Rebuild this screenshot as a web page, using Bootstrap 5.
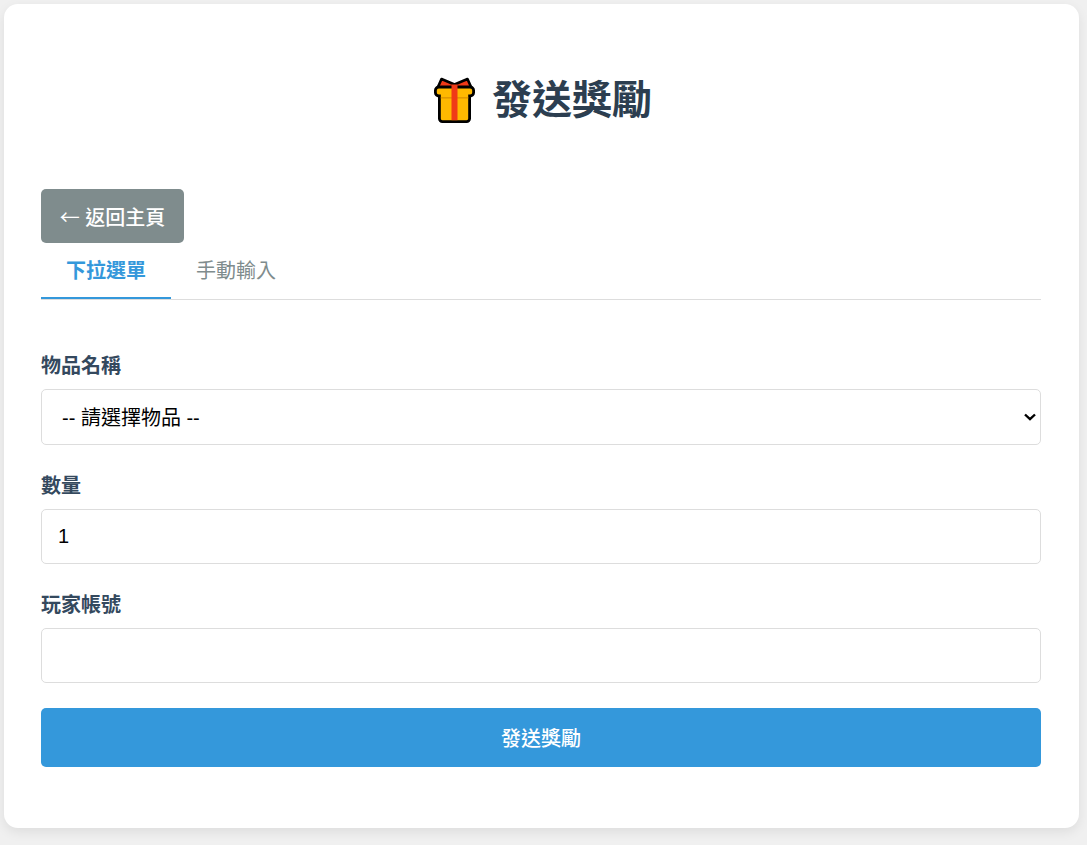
<!DOCTYPE html>
<html lang="zh-Hant">
<head>
<meta charset="utf-8">
<title>發送獎勵</title>
<link href="https://cdn.jsdelivr.net/npm/bootstrap@5.3.0/dist/css/bootstrap.min.css" rel="stylesheet">
<style>
html, body { height: 100%; }
body { background: #f0f0f0; font-family: "Liberation Sans", "Noto Sans CJK TC", sans-serif; padding: 4px 8px 0 4px; font-size: 20px; overflow: hidden; }
.panel { background: #fff; border-radius: 14px; box-shadow: 0 4px 12px rgba(0,0,0,.08); height: 824px; padding: 0 38px 0 37px; }
.title-row { height: 185px; padding-top: 6px; padding-left: 4px; color: #2c3e50; font-size: 40px; font-weight: 700; gap: 17px; }
.gift { width: 41px; height: 46px; }
.back-btn { background: #7f8c8d; color: #fff; font-size: 20px; font-weight: 500; height: 54px; width: 143px; border-radius: 5px; border: 0; padding: 2px 0 0; }
.back-btn:hover { background: #7f8c8d; color: #fff; }
.arrow-glyph { font-family: "Noto Sans CJK TC", sans-serif; font-weight: 400; }
.tabbar { border-bottom: 1px solid #ddd; height: 57px; margin-bottom: 52px; }
.tabbar .tab-link { display: block; width: 130px; height: 56px; padding-top: 14px; text-align: center; color: #7f8c8d; font-size: 20px; line-height: 29px; text-decoration: none; }
.tabbar .tab-link.on { color: #3498db; font-weight: 700; border-bottom: 2px solid #3498db; }
.fld-label { color: #34495e; font-weight: 700; font-size: 20px; line-height: 29px; margin-bottom: 8px; display: block; }
.fld { margin-bottom: 27px; }
.fld:last-of-type { margin-bottom: 25px; }
.fld-box { display: block; width: 100%; height: 55px; border: 1px solid #ddd; border-radius: 5px; font-size: 20px; padding: 0 16px; background: #fff; color: #000; font-family: inherit; }
select.fld-box { height: 56px; padding: 1px 15px 0 20px; appearance: none; background: #fff url("data:image/svg+xml,%3Csvg xmlns='http://www.w3.org/2000/svg' width='12' height='8' viewBox='0 0 12 8'%3E%3Cpath d='M1 1.5 L6 6.2 L11 1.5' fill='none' stroke='%23000' stroke-width='2.4'/%3E%3C/svg%3E") no-repeat right 4px center; }
.send-btn { background: #3498db; color: #fff; font-size: 20px; font-weight: 500; height: 59px; width: 100%; border: 0; border-radius: 5px; padding: 2px 0 0; }
.send-btn:hover { background: #3498db; color: #fff; }
</style>
</head>
<body>
<div class="panel">
  <div class="title-row d-flex align-items-center justify-content-center">
    <svg class="gift" viewBox="0 0 41 46" aria-hidden="true">
      <path d="M3.5 11 L7.5 2 L20.5 7.5 L33.5 2 L37.5 11 Z" fill="#f03a17" stroke="#000" stroke-width="2.6" stroke-linejoin="round"/>
      <rect x="5.4" y="16" width="30.2" height="28.6" rx="3" fill="#ffb900" stroke="#000" stroke-width="2.8"/>
      <rect x="1.4" y="10" width="38.2" height="9" rx="3.5" fill="#ffb900" stroke="#000" stroke-width="2.8"/>
      <rect x="6.8" y="17" width="27.4" height="3.6" fill="#ffb900"/>
      <rect x="6.8" y="20" width="27.4" height="1.6" fill="#e29a00"/>
      <rect x="17.5" y="7.5" width="6" height="35.7" fill="#f03a17"/>
    </svg>
    <span>發送獎勵</span>
  </div>
  <button type="button" class="btn back-btn d-block"><span class="arrow-glyph">←</span> 返回主頁</button>
  <div class="tabbar d-flex">
    <a class="tab-link on" href="#">下拉選單</a>
    <a class="tab-link" href="#">手動輸入</a>
  </div>
  <form>
    <div class="fld">
      <label class="fld-label">物品名稱</label>
      <select class="fld-box"><option>-- 請選擇物品 --</option></select>
    </div>
    <div class="fld">
      <label class="fld-label">數量</label>
      <input class="fld-box" type="number" value="1">
    </div>
    <div class="fld">
      <label class="fld-label">玩家帳號</label>
      <input class="fld-box" type="text">
    </div>
    <button type="button" class="btn send-btn">發送獎勵</button>
  </form>
</div>
<script src="https://cdn.jsdelivr.net/npm/bootstrap@5.3.0/dist/js/bootstrap.bundle.min.js"></script>
</body>
</html>
